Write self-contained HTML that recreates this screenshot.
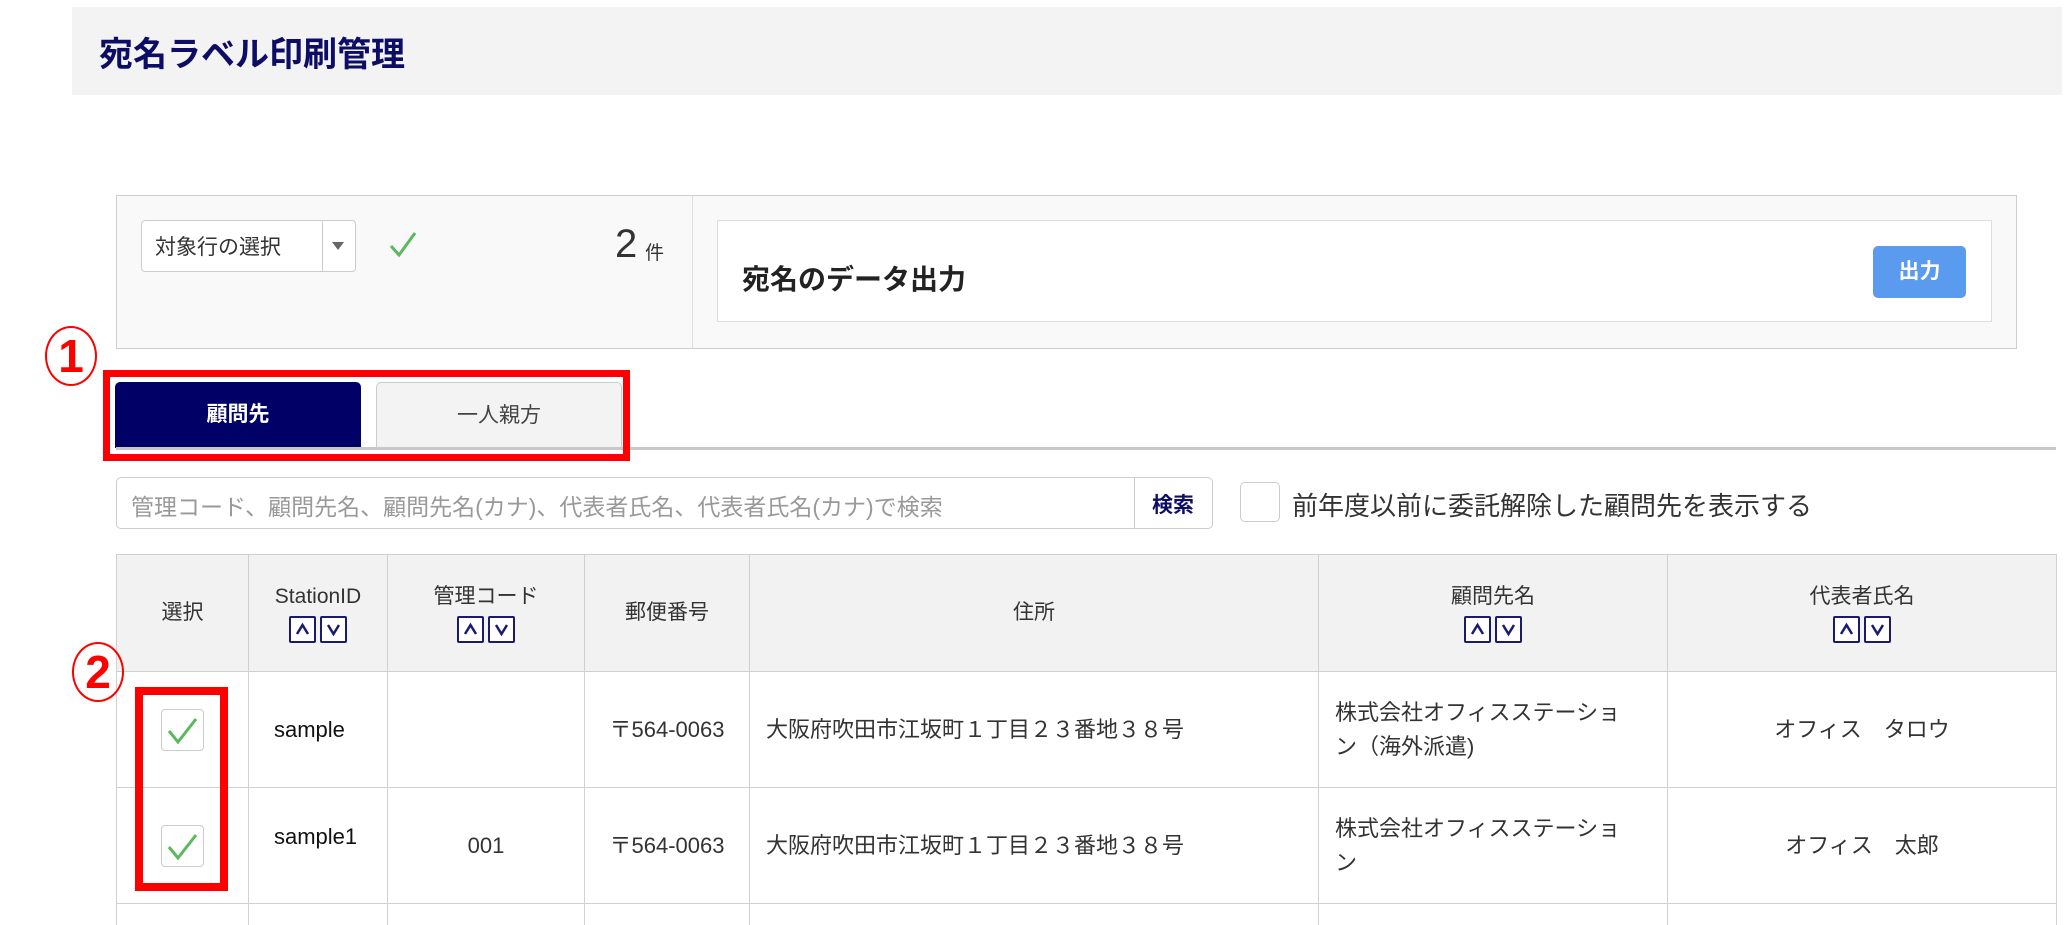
<!DOCTYPE html>
<html style="overflow:hidden;height:925px"><head><meta charset="utf-8"><style>
*{box-sizing:border-box;margin:0;padding:0}
body{width:2067px;height:925px;background:#fff;position:relative;overflow:hidden;font-family:"Liberation Sans","Noto Sans CJK JP",sans-serif;color:#333}
.a{position:absolute}
.sort{display:inline-block;width:27px;height:27px;border:2px solid #1a1a70;border-radius:2px;margin:0 2px;vertical-align:middle;position:relative;background:#fff}
.sort svg{position:absolute;left:4px;top:4px}
td,th{border:1px solid #d0d0d0}
table{border-collapse:collapse;position:absolute;left:116px;top:554px;width:1940px;table-layout:fixed}
th{background:#f2f2f2;font-weight:normal;font-size:21px;height:117px;color:#333;line-height:32px}
td{font-size:22px;height:116px;color:#333;line-height:34px}
.cb{width:43px;height:42px;border:1px solid #ccc;border-radius:4px;background:#fff;margin:0 auto;position:relative}
</style></head><body>
<div class="a" style="left:72px;top:7px;width:1990px;height:88px;background:#f3f3f3"></div>
<div class="a" style="left:99px;top:27px;font-size:34px;font-weight:bold;color:#0d0d66">宛名ラベル印刷管理</div>

<div class="a" style="left:116px;top:195px;width:1901px;height:154px;background:#f9f9f9;border:1px solid #cfcfcf"></div>
<div class="a" style="left:692px;top:196px;width:1px;height:152px;background:#e0e0e0"></div>
<div class="a" style="left:141px;top:220px;width:215px;height:52px;background:#fff;border:1px solid #ccc;border-radius:4px"></div>
<div class="a" style="left:322px;top:220px;width:1px;height:52px;background:#ccc"></div>
<div class="a" style="left:155px;top:231px;font-size:21px;color:#333">対象行の選択</div>
<div class="a" style="left:332px;top:242px;width:0;height:0;border-left:6px solid transparent;border-right:6px solid transparent;border-top:8px solid #666"></div>
<svg class="a" style="left:388px;top:230px" width="30" height="28"><path d="M3 16 L11 25 L27 3" stroke="#5cb85c" stroke-width="3" fill="none"/></svg>
<div class="a" style="left:615px;top:222px;font-size:40px;color:#333">2</div>
<div class="a" style="left:645px;top:238px;font-size:19px;color:#333">件</div>
<div class="a" style="left:717px;top:220px;width:1275px;height:102px;background:#fff;border:1px solid #ddd"></div>
<div class="a" style="left:742px;top:258px;font-size:28px;font-weight:bold;color:#222">宛名のデータ出力</div>
<div class="a" style="left:1873px;top:246px;width:93px;height:52px;background:#5b9bef;border-radius:5px;color:#fff;font-weight:bold;font-size:21px;text-align:center;line-height:52px">出力</div>

<div class="a" style="left:45px;top:326px;width:52px;height:60px;border:2px solid #f00;border-radius:50%;color:#f00;font-size:46px;font-weight:bold;text-align:center;line-height:56px">1</div>
<div class="a" style="left:115px;top:382px;width:246px;height:66px;background:#000066;border-radius:5px 5px 0 0;color:#fff;font-weight:bold;font-size:21px;text-align:center;line-height:66px">顧問先</div>
<div class="a" style="left:376px;top:382px;width:246px;height:66px;background:#f3f3f3;border:1px solid #ccc;border-bottom:none;border-radius:5px 5px 0 0;color:#444;font-size:21px;text-align:center;line-height:66px">一人親方</div>
<div class="a" style="left:116px;top:447px;width:1940px;height:3px;background:#c8c8c8"></div>
<div class="a" style="left:103px;top:370px;width:527px;height:91px;border:7px solid #f00"></div>

<div class="a" style="left:116px;top:477px;width:1097px;height:52px;background:#fff;border:1px solid #ccc;border-radius:5px"></div>
<div class="a" style="left:1134px;top:478px;width:1px;height:50px;background:#ccc"></div>
<div class="a" style="left:131px;top:488px;font-size:23px;color:#999">管理コード、顧問先名、顧問先名(カナ)、代表者氏名、代表者氏名(カナ)で検索</div>
<div class="a" style="left:1152px;top:489px;font-size:21px;font-weight:bold;color:#0d0d66">検索</div>
<div class="a" style="left:1240px;top:482px;width:40px;height:40px;border:1px solid #ccc;border-radius:5px;background:#fff"></div>
<div class="a" style="left:1292px;top:486px;font-size:26px;color:#333">前年度以前に委託解除した顧問先を表示する</div>

<table>
<colgroup><col style="width:132px"><col style="width:139px"><col style="width:197px"><col style="width:165px"><col style="width:569px"><col style="width:349px"><col style="width:389px"></colgroup>
<tr><th>選択</th><th>StationID<br><span class="sort"><svg width="15" height="15"><path d="M2 12L7.5 3L13 12" stroke="#1a1a70" stroke-width="2.5" fill="none"/></svg></span><span class="sort"><svg width="15" height="15"><path d="M2 3L7.5 12L13 3" stroke="#1a1a70" stroke-width="2.5" fill="none"/></svg></span></th>
<th>管理コード<br><span class="sort"><svg width="15" height="15"><path d="M2 12L7.5 3L13 12" stroke="#1a1a70" stroke-width="2.5" fill="none"/></svg></span><span class="sort"><svg width="15" height="15"><path d="M2 3L7.5 12L13 3" stroke="#1a1a70" stroke-width="2.5" fill="none"/></svg></span></th>
<th>郵便番号</th><th>住所</th>
<th>顧問先名<br><span class="sort"><svg width="15" height="15"><path d="M2 12L7.5 3L13 12" stroke="#1a1a70" stroke-width="2.5" fill="none"/></svg></span><span class="sort"><svg width="15" height="15"><path d="M2 3L7.5 12L13 3" stroke="#1a1a70" stroke-width="2.5" fill="none"/></svg></span></th>
<th>代表者氏名<br><span class="sort"><svg width="15" height="15"><path d="M2 12L7.5 3L13 12" stroke="#1a1a70" stroke-width="2.5" fill="none"/></svg></span><span class="sort"><svg width="15" height="15"><path d="M2 3L7.5 12L13 3" stroke="#1a1a70" stroke-width="2.5" fill="none"/></svg></span></th></tr>
<tr><td><div class="cb"><svg class="a" style="left:4px;top:6px" width="34" height="30"><path d="M3 15 L12 26 L30 3" stroke="#5cb85c" stroke-width="3" fill="none"/></svg></div></td>
<td style="padding-left:25px;color:#111">sample</td><td></td><td style="text-align:center">〒564-0063</td>
<td style="padding-left:16px">大阪府吹田市江坂町１丁目２３番地３８号</td>
<td style="padding-left:16px">株式会社オフィスステーショ<br>ン（海外派遣)</td><td style="text-align:center">オフィス　タロウ</td></tr>
<tr><td><div class="cb"><svg class="a" style="left:4px;top:6px" width="34" height="30"><path d="M3 15 L12 26 L30 3" stroke="#5cb85c" stroke-width="3" fill="none"/></svg></div></td>
<td style="padding-left:25px;color:#111;vertical-align:top;padding-top:32px">sample1</td><td style="text-align:center">001</td><td style="text-align:center">〒564-0063</td>
<td style="padding-left:16px">大阪府吹田市江坂町１丁目２３番地３８号</td>
<td style="padding-left:16px">株式会社オフィスステーショ<br>ン</td><td style="text-align:center">オフィス　太郎</td></tr>
<tr><td style="height:20px;border-bottom:none"></td><td style="border-bottom:none"></td><td style="border-bottom:none"></td><td style="border-bottom:none"></td><td style="border-bottom:none"></td><td style="border-bottom:none"></td><td style="border-bottom:none"></td></tr>
</table>

<div class="a" style="left:72px;top:642px;width:52px;height:60px;border:2px solid #f00;border-radius:50%;color:#f00;font-size:46px;font-weight:bold;text-align:center;line-height:56px">2</div>
<div class="a" style="left:135px;top:687px;width:93px;height:204px;border:8px solid #f00"></div>
</body></html>
